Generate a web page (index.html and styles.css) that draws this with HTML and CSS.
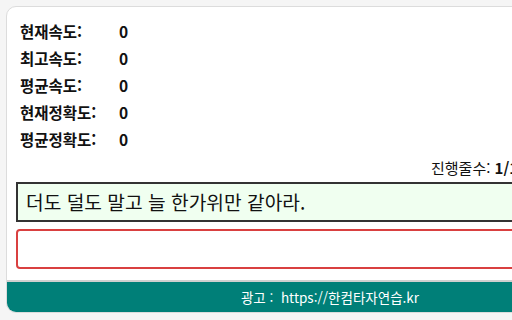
FILE: index.html
```html
<!DOCTYPE html>
<html lang="ko">
<head>
  <meta charset="UTF-8">
  <meta name="viewport" content="width=device-width, initial-scale=1.0">
  <title>한컴타자연습 - 긴글 연습</title>
  <link rel="stylesheet" href="styles.css">
</head>
<body>

  <div class="card">
    <div class="stats">
      <div class="stat"><span class="label">현재속도:</span><span class="value">0</span></div>
      <div class="stat"><span class="label">최고속도:</span><span class="value">0</span></div>
      <div class="stat"><span class="label">평균속도:</span><span class="value">0</span></div>
      <div class="stat"><span class="label">현재정확도:</span><span class="value">0</span></div>
      <div class="stat"><span class="label">평균정확도:</span><span class="value">0</span></div>
    </div>

    <div class="progress">진행줄수: <b>1/10</b></div>

    <div class="sentence">더도 덜도 말고 늘 한가위만 같아라.</div>
    <input type="text" class="typing" autocomplete="off">

    <div class="footer">광고 :&nbsp; https://한컴타자연습.kr</div>
  </div>

</body>
</html>
```

FILE: styles.css
```css
body {
  margin: 0;
  padding: 6px;
  background-color: #f5f5f5;
  font-family: "Noto Sans CJK KR", "Noto Sans", sans-serif;
  color: #111;
  overflow: hidden;
}
.card {
  width: 646px;
  background-color: white;
  border: 1px solid #dcdcdc;
  border-radius: 10px;
  overflow: hidden;
}
.stats { padding: 10px 13px 0; }
.stat {
  display: flex;
  height: 27px;
  align-items: center;
  font-size: 15.5px;
  font-weight: bold;
}
.label { width: 99px; }
.progress {
  text-align: right;
  font-size: 15px;
  padding-right: 126px;
  margin-top: 6px;
  height: 20px;
  line-height: 20px;
}
.sentence {
  margin: 4px 9px 0;
  height: 36px;
  line-height: 36px;
  border: 2px solid #333;
  background-color: #f0fff0;
  font-size: 19.2px;
  padding: 0 8px;
}
.typing {
  display: block;
  box-sizing: border-box;
  width: calc(100% - 18px);
  margin: 7px 9px 0;
  height: 40px;
  border: 2px solid #d94040;
  border-radius: 4px;
  outline: none;
  font-size: 18px;
  padding: 0 8px;
}
.footer {
  margin-top: 11px;
  border-top: 2px solid #cfcfcf;
  background-color: #007f78;
  color: white;
  height: 30px;
  line-height: 30px;
  text-align: center;
  font-size: 13.5px;
}
```
